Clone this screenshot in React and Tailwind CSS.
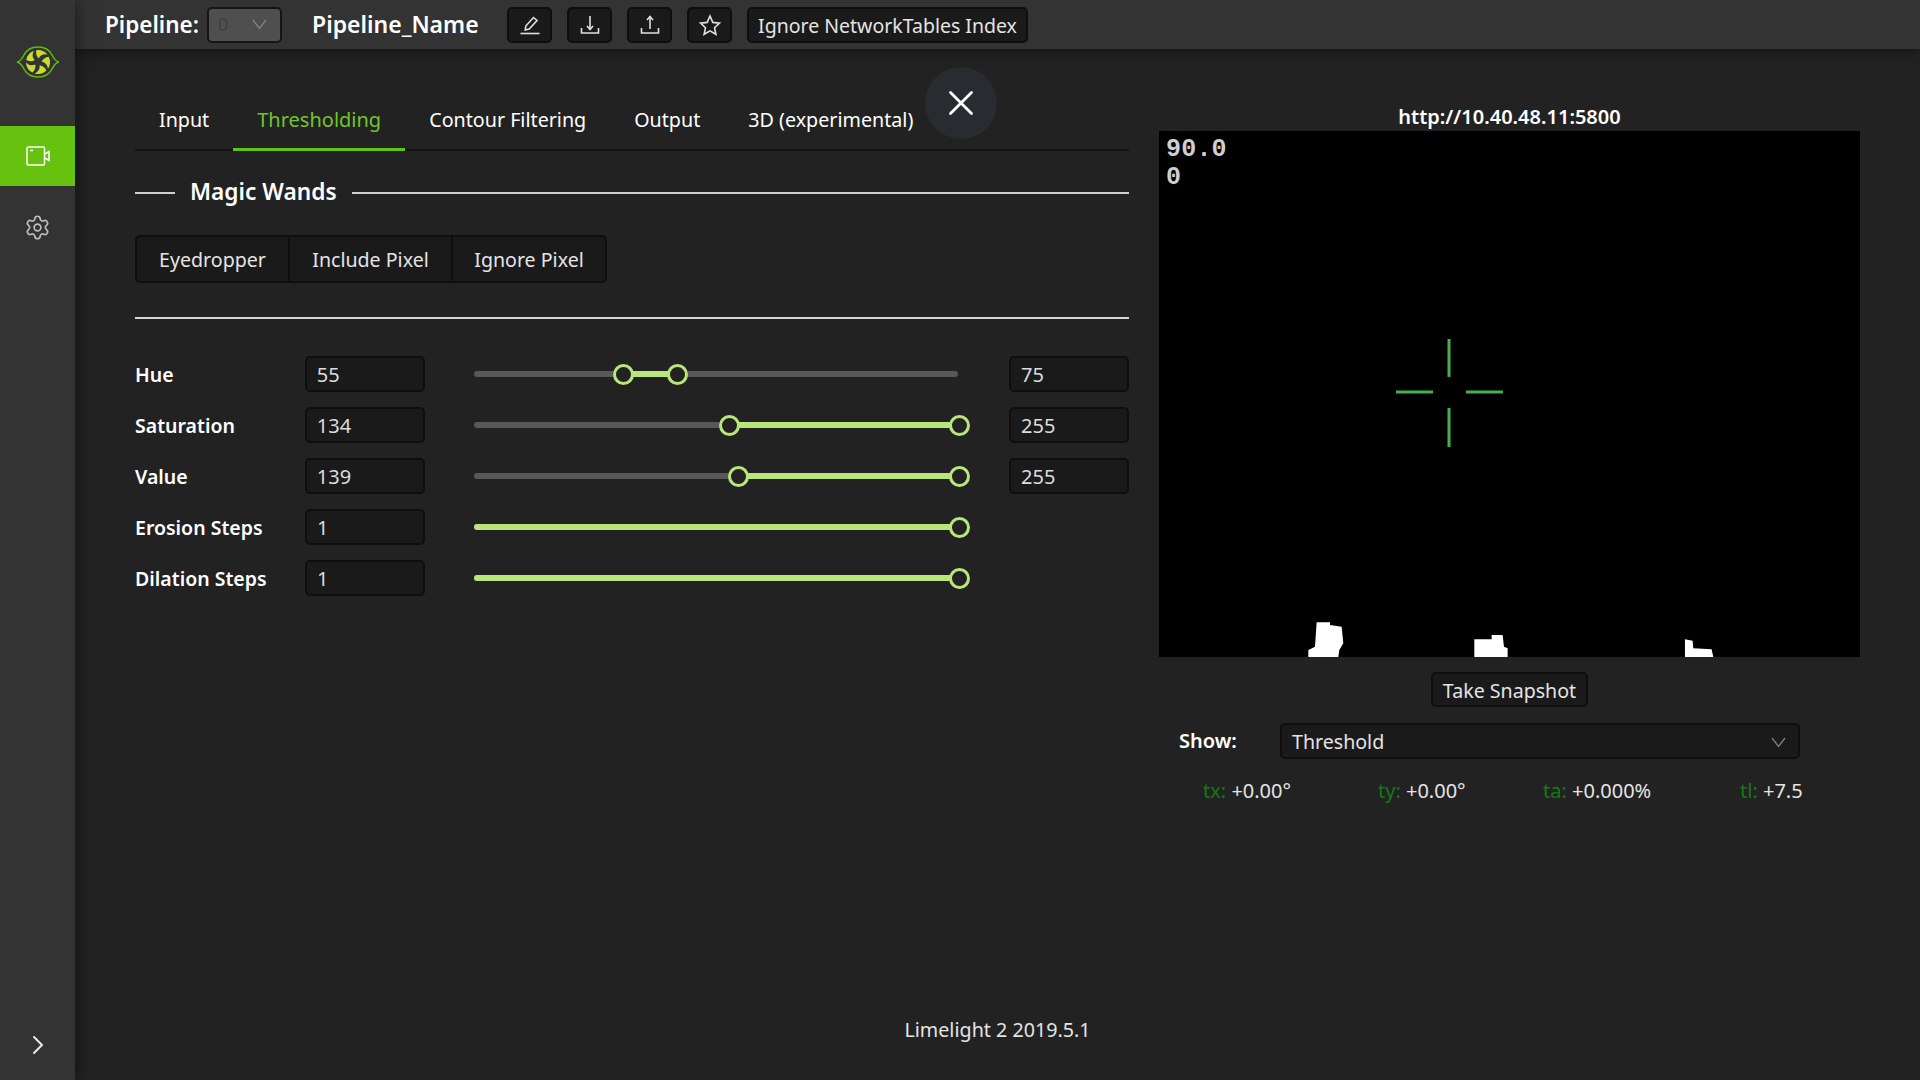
import React from "react";
import { ChevronRight, Settings, X } from "lucide-react";

function IconButton({ children }) {
  return (
    <button className="flex h-[36px] w-[45px] items-center justify-center rounded-[5px] border-2 border-[#0e0e0e] bg-[#1a1a1a]">
      {children}
    </button>
  );
}

function Glyph({ children }) {
  return (
    <svg width="24" height="24" viewBox="0 0 24 24" fill="none" stroke="#e0e0e0" strokeWidth="1.6">
      {children}
    </svg>
  );
}

function Caret() {
  return (
    <svg width="15" height="11" viewBox="0 0 15 11" fill="none" stroke="#808080" strokeWidth="1.3">
      <path d="M1 1 L7.5 9.5 L14 1" />
    </svg>
  );
}

function Logo() {
  const blades = [0, 72, 144, 216, 288];
  return (
    <svg width="44" height="32" viewBox="0 0 44 32">
      <path
        d="M1 16 C4 15.5 6 13 8 9 C10.5 4 16 1 22 1 C28 1 33.5 4 36 9 C38 13 40 15.5 43 16 C40 16.5 38 19 36 23 C33.5 28 28 31 22 31 C16 31 10.5 28 8 23 C6 19 4 16.5 1 16 Z"
        fill="none"
        stroke="#62b80f"
        strokeWidth="1.5"
      />
      <g transform="translate(22 16)">
        {blades.map((a) => (
          <path
            key={a}
            transform={`rotate(${a})`}
            d="M-1.8 -11.8 A12 12 0 0 1 9.4 -7.4 Q3.5 -8.6 0.6 -3.6 Q-2.6 -7.2 -1.8 -11.8 Z"
            fill="#c9dc2f"
          />
        ))}
      </g>
    </svg>
  );
}

function Sidebar() {
  return (
    <aside className="z-20 flex h-screen w-[75px] shrink-0 flex-col bg-[#333333] shadow-[0_0_16px_rgba(0,0,0,0.55)]">
      <div className="flex h-[126px] items-start justify-center pt-[46px]">
        <Logo />
      </div>
      <div className="flex h-[60px] items-center justify-center bg-[#66c20e]">
        <svg width="24" height="20" viewBox="0 0 24 20" fill="none" stroke="#ffffff" strokeWidth="1.5">
          <rect x="1" y="1" width="17.5" height="18" rx="1.5" />
          <path d="M19 8 L23 5.5 V14.5 L19 12" />
          <path d="M4 4.5 H7" />
        </svg>
      </div>
      <div className="flex h-[82px] items-center justify-center">
        <Settings size={27} strokeWidth={1.5} color="#bdbdbd" />
      </div>
      <div className="mt-auto flex h-[74px] items-start justify-center pt-[23px]">
        <ChevronRight size={32} strokeWidth={1.5} color="#e8e8e8" />
      </div>
    </aside>
  );
}

function TopBar() {
  return (
    <header className="z-10 flex h-[49px] shrink-0 items-center bg-[#333333] pl-[30px] text-white shadow-[0_2px_12px_rgba(0,0,0,0.45)]">
      <span className="w-[102px] text-[22.5px] font-semibold">Pipeline:</span>
      <div className="flex h-[36px] w-[75px] items-center justify-between rounded-[5px] border-2 border-[#151515] bg-[#4f4f4f] pl-[9px] pr-[13px]">
        <span className="text-[18px] text-[#3f3f3f]">0</span>
        <Caret />
      </div>
      <span className="ml-[30px] w-[195px] text-[23px] font-semibold">Pipeline_Name</span>
      <div className="flex items-center gap-[15px]">
        <IconButton>
          <Glyph>
            <path d="M2.5 20.5 H21.5" />
            <path d="M7.2 17 L7.8 13 L15.5 4.5 L19 7.5 L11.2 16 Z" />
          </Glyph>
        </IconButton>
        <IconButton>
          <Glyph>
            <path d="M3.5 15 V20 H20.5 V15" />
            <path d="M12 3 V16" />
            <path d="M9 13 L12 16.5 L15 13" />
          </Glyph>
        </IconButton>
        <IconButton>
          <Glyph>
            <path d="M3.5 15 V20 H20.5 V15" />
            <path d="M12 4 V16" />
            <path d="M9 7 L12 3.5 L15 7" />
          </Glyph>
        </IconButton>
        <IconButton>
          <Glyph>
            <path d="M12 3 L14.8 9.4 L21.5 10.1 L16.5 14.7 L17.9 21.3 L12 17.9 L6.1 21.3 L7.5 14.7 L2.5 10.1 L9.2 9.4 Z" />
          </Glyph>
        </IconButton>
        <button className="flex h-[36px] w-[281px] items-center justify-center rounded-[5px] border-2 border-[#0e0e0e] bg-[#1a1a1a] pt-[2px] text-[19.5px] text-[#e4e4e4]">
          Ignore NetworkTables Index
        </button>
      </div>
    </header>
  );
}

function Tabs() {
  const tabs = ["Input", "Thresholding", "Contour Filtering", "Output", "3D (experimental)"];
  return (
    <div className="flex h-[84px] items-end border-b-2 border-[#141414]">
      {tabs.map((t) => (
        <div
          key={t}
          className={
            t === "Thresholding"
              ? "-mb-[2px] border-b-[3px] border-[#66c20e] px-[24px] pb-[14px] text-[20px] leading-[28px] text-[#71c62a]"
              : "-mb-[2px] border-b-[3px] border-transparent px-[24px] pb-[14px] text-[19.7px] leading-[28px] text-white"
          }
        >
          {t}
        </div>
      ))}
      <div className="-ml-[12px] flex h-[72px] w-[72px] items-center justify-center self-start rounded-full bg-[#282b30]">
        <X size={42} strokeWidth={1.6} color="#ffffff" />
      </div>
    </div>
  );
}

function MagicWands() {
  return (
    <>
      <div className="mt-[27px] flex h-[30px] items-center text-white">
        <div className="h-[2px] w-[40px] bg-[#cfcfcf]" />
        <span className="-mt-[1px] ml-[15px] text-[22.7px] font-semibold">Magic Wands</span>
        <div className="ml-[15px] h-[2px] flex-1 bg-[#cfcfcf]" />
      </div>
      <div className="mt-[27px] flex h-[48px] w-[472px] rounded-[5px] border-2 border-[#0e0e0e] bg-[#1a1a1a] pt-[2px] text-[19.6px] text-[#e4e4e4]">
        <div className="-mt-[2px] flex w-[153px] items-center justify-center border-r-2 border-[#0e0e0e] pt-[2px]">Eyedropper</div>
        <div className="-mt-[2px] flex w-[163px] items-center justify-center border-r-2 border-[#0e0e0e] pt-[2px]">Include Pixel</div>
        <div className="-mt-[2px] flex flex-1 items-center justify-center pt-[2px]">Ignore Pixel</div>
      </div>
      <div className="mt-[34px] h-[2px] bg-[#d4d4d4]" />
    </>
  );
}

function NumberBox({ value, className }) {
  return (
    <div className={`flex h-[36px] w-[120px] items-center rounded-[5px] border-2 border-[#0e0e0e] bg-[#1a1a1a] pl-[10px] pt-[2px] text-[20px] text-[#dcdcdc] ${className}`}>
      {value}
    </div>
  );
}

function Slider({ from, to, single }) {
  const start = single ? 0 : from;
  return (
    <div className="relative ml-[49px] h-[6px] w-[485px] rounded-full bg-[#585858]">
      <div className="absolute top-0 h-[6px] rounded-full bg-[#b9e57a]" style={{ left: start, width: to - start }} />
      {!single && (
        <div className="absolute top-[-7px] h-[21px] w-[21px] rounded-full border-[3px] border-[#b9e57a] bg-[#222222]" style={{ left: from - 10 }} />
      )}
      <div className="absolute top-[-7px] h-[21px] w-[21px] rounded-full border-[3px] border-[#b9e57a] bg-[#222222]" style={{ left: to - 10 }} />
    </div>
  );
}

function Row({ label, low, high, from, to, single }) {
  return (
    <div className="flex h-[36px] items-center">
      <span className="w-[170px] pt-[2px] text-[19.5px] font-semibold text-white">{label}</span>
      <NumberBox value={low} />
      <Slider from={from} to={to} single={single} />
      {high && <NumberBox value={high} className="ml-[51px]" />}
    </div>
  );
}

function LeftPane() {
  return (
    <section className="ml-[60px] w-[994px] shrink-0 pt-[18px]">
      <Tabs />
      <MagicWands />
      <div className="flex flex-col gap-[15px] pt-[37px]">
        <Row label="Hue" low="55" high="75" from={149} to={203} />
        <Row label="Saturation" low="134" high="255" from={255} to={485} />
        <Row label="Value" low="139" high="255" from={264} to={485} />
        <Row label="Erosion Steps" low="1" to={485} single />
        <Row label="Dilation Steps" low="1" to={485} single />
      </div>
    </section>
  );
}

function CameraFeed() {
  return (
    <div className="relative h-[526px] w-[701px] overflow-hidden bg-black">
      <svg className="absolute inset-0" width="701" height="526" viewBox="0 0 701 526">
        <g stroke="#46b04f" strokeWidth="3">
          <path d="M290 208 V246 M290 277 V316 M237 261 H274 M307 261 H344" />
        </g>
        <g transform="translate(121 459) scale(0.3333)" fill="#ffffff">
          <path d="M85 201 V180 L105 170 L110 97 H150 V105 L185 110 L190 160 L178 180 L175 201 Z" />
          <path d="M583 201 V148 H635 V135 H668 L672 170 L683 175 V201 Z" />
          <path d="M1215 201 V148 L1238 152 L1240 175 L1295 178 L1300 201 Z" />
        </g>
      </svg>
      <div className="absolute left-[7px] top-[5px] font-['Liberation_Mono',monospace] text-[25px] font-bold leading-[28px] tracking-[0.2px] text-[#cfcfcf]">
        <div>90.0</div>
        <div>0</div>
      </div>
    </div>
  );
}

function Stat({ name, value, className }) {
  return (
    <div className={`text-[20px] ${className}`}>
      <span className="text-[#127a12]">{name}</span> <span className="text-[#e4e4e4]">{value}</span>
    </div>
  );
}

function RightPane() {
  return (
    <section className="ml-[30px] w-[701px] shrink-0 pt-[54px]">
      <div className="h-[28px] text-center text-[20px] font-semibold leading-[28px] text-white">http://10.40.48.11:5800</div>
      <CameraFeed />
      <div className="mt-[15px] flex justify-center">
        <button className="flex h-[35px] w-[157px] items-center justify-center rounded-[5px] border-2 border-[#0e0e0e] bg-[#1a1a1a] pt-[2px] text-[19.6px] text-[#e4e4e4]">
          Take Snapshot
        </button>
      </div>
      <div className="mt-[16px] flex items-center pl-[20px]">
        <span className="w-[101px] text-[20px] font-semibold text-white">Show:</span>
        <div className="flex h-[36px] w-[520px] items-center justify-between rounded-[5px] border-2 border-[#0e0e0e] bg-[#1a1a1a] pl-[10px] pr-[12px] pt-[2px] text-[19.6px] text-[#e4e4e4]">
          <span>Threshold</span>
          <Caret />
        </div>
      </div>
      <div className="mt-[17px] flex h-[30px] items-center pl-[44px]">
        <Stat name="tx:" value="+0.00°" className="w-[175px]" />
        <Stat name="ty:" value="+0.00°" className="w-[165px]" />
        <Stat name="ta:" value="+0.000%" className="w-[197px]" />
        <Stat name="tl:" value="+7.5" />
      </div>
    </section>
  );
}

export default function App() {
  return (
    <div className="flex h-screen w-screen overflow-hidden bg-[#222222] font-['Noto_Sans',sans-serif]">
      <Sidebar />
      <main className="flex min-w-0 flex-1 flex-col">
        <TopBar />
        <div className="flex flex-1">
          <LeftPane />
          <RightPane />
        </div>
        <footer className="flex h-[65px] items-start justify-center text-[19.7px] text-[#e4e4e4]">Limelight 2 2019.5.1</footer>
      </main>
    </div>
  );
}
